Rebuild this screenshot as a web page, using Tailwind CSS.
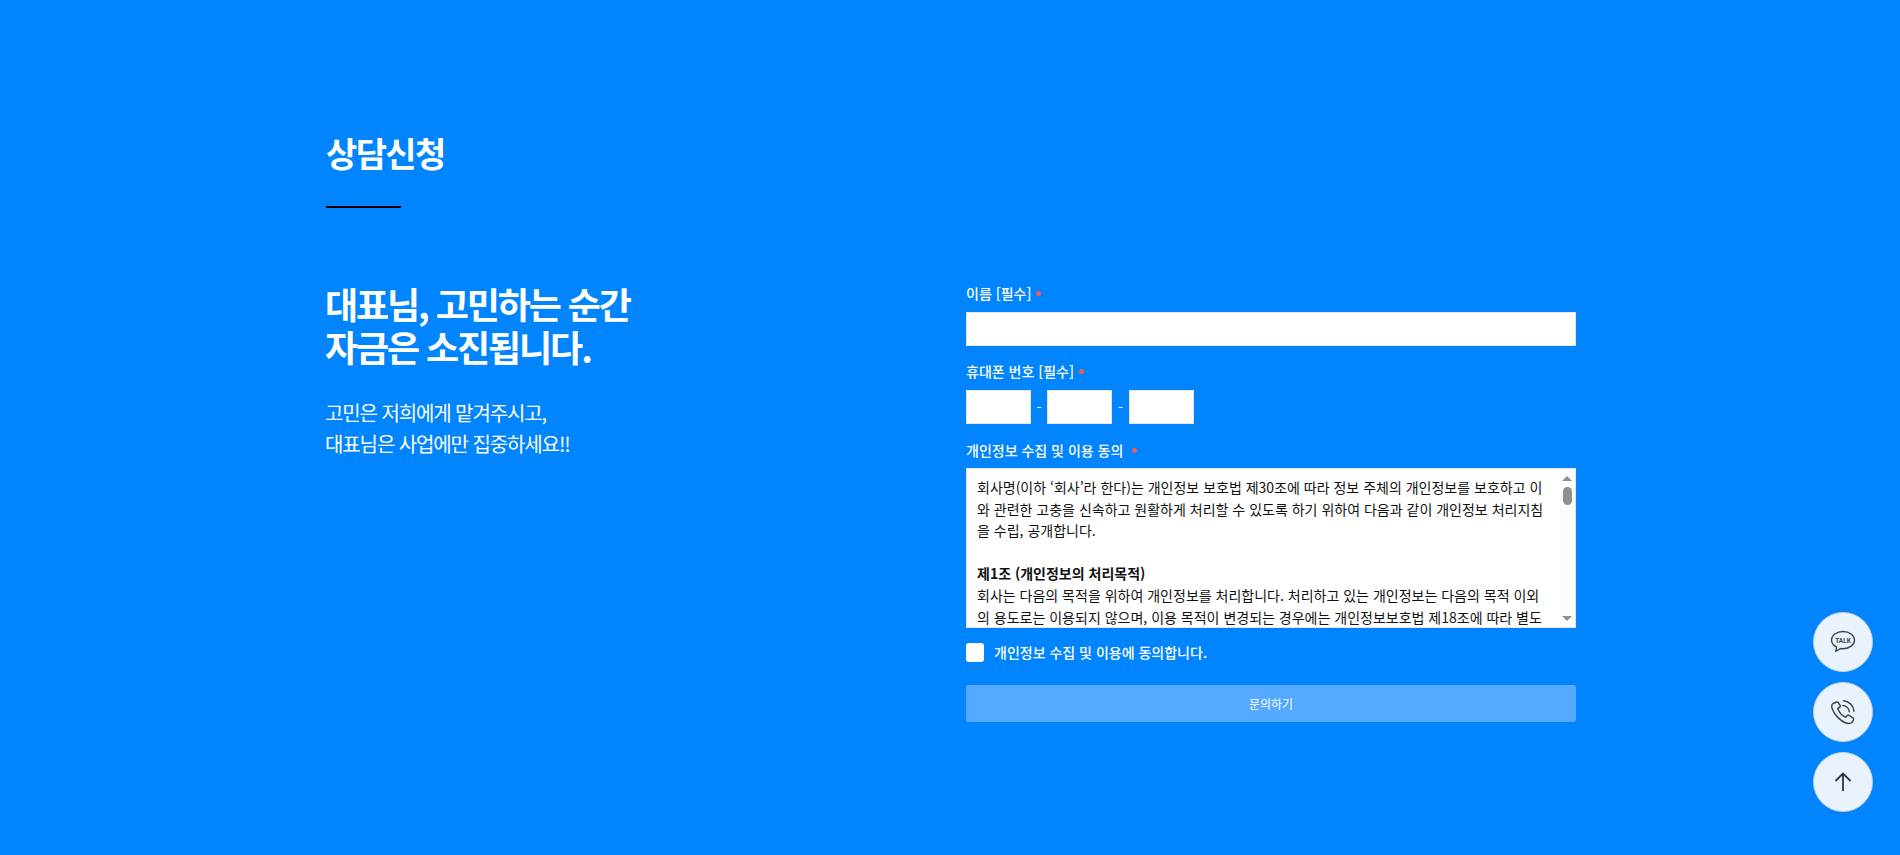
<!DOCTYPE html>
<html lang="ko">
<head>
  <meta charset="UTF-8" />
  <title>상담신청</title>
  <script src="https://cdn.jsdelivr.net/npm/@tailwindcss/browser@4"></script>
</head>
<body class="bg-[#0085ff] h-[855px] overflow-hidden font-['Noto_Sans_CJK_KR','Noto_Sans',sans-serif] text-white">

  <section class="w-[1250px] ml-[326px] pt-[128px]">
    <h2 class="text-[34px] leading-[49px] font-bold tracking-[-1.6px]">상담신청</h2>
    <div class="w-[75px] h-[2px] bg-black mt-[29px]"></div>

    <div class="flex justify-between mt-[73px]">
      <!-- 왼쪽 문구 -->
      <div class="-ml-px pt-px">
        <h3 class="text-[36px] leading-[43px] font-bold tracking-[-2.1px]">대표님, 고민하는 순간<br />자금은 소진됩니다.</h3>
        <p class="mt-[29px] text-[20px] leading-[31px] tracking-[-1.1px]">고민은 저희에게 맡겨주시고,<br />대표님은 사업에만 집중하세요!!</p>
      </div>

      <!-- 상담 폼 -->
      <form class="w-[610px] shrink-0 pt-[2px]">
        <label class="flex items-center h-[20px] mb-[9px] text-[14px] font-medium">이름 [필수]<span class="w-[5px] h-[5px] rounded-full bg-[#f25c5c] ml-[5px]"></span></label>
        <input type="text" class="block w-full h-[34px] bg-white border border-[#e5e5e5]" />

        <label class="flex items-center h-[20px] mt-[15px] mb-[9px] text-[14px] font-medium">휴대폰 번호 [필수]<span class="w-[5px] h-[5px] rounded-full bg-[#f25c5c] ml-[5px]"></span></label>
        <div class="flex items-center">
          <input type="text" class="w-[65px] h-[34px] bg-white border border-[#e5e5e5]" />
          <span class="w-[16px] text-center text-[14px]">-</span>
          <input type="text" class="w-[65px] h-[34px] bg-white border border-[#e5e5e5]" />
          <span class="w-[17px] text-center text-[14px]">-</span>
          <input type="text" class="w-[65px] h-[34px] bg-white border border-[#e5e5e5]" />
        </div>

        <label class="flex items-center h-[20px] mt-[16px] mb-[8px] text-[14px] font-medium">개인정보 수집 및 이용 동의<span class="w-[5px] h-[5px] rounded-full bg-[#f25c5c] ml-[9px]"></span></label>
        <div class="flex h-[160px] bg-white border border-[#e5e5e5]">
          <div class="flex-1 min-w-0 overflow-hidden pl-[10px] pr-[8px] pt-[8px] text-[14px] leading-[21.6px] text-[#111]">
            회사명(이하 ‘회사’라 한다)는 개인정보 보호법 제30조에 따라 정보 주체의 개인정보를 보호하고 이와 관련한 고충을 신속하고 원활하게 처리할 수 있도록 하기 위하여 다음과 같이 개인정보 처리지침을 수립, 공개합니다.<br /><br />
            <b class="font-bold">제1조 (개인정보의 처리목적)</b><br />
            회사는 다음의 목적을 위하여 개인정보를 처리합니다. 처리하고 있는 개인정보는 다음의 목적 이외의 용도로는 이용되지 않으며, 이용 목적이 변경되는 경우에는 개인정보보호법 제18조에 따라 별도의 동의를 받는 등 필요한 조치를 이행할 예정입니다.
          </div>
          <!-- 스크롤바 -->
          <div class="w-[15px] shrink-0 bg-[#fcfcfc] flex flex-col items-center pt-[7px] pb-[6px] pr-px">
            <span class="w-0 h-0 border-x-[5px] border-x-transparent border-b-[5px] border-b-[#8f8f8f]"></span>
            <span class="w-[9px] h-[18px] mt-[6px] rounded-full bg-[#8f8f8f]"></span>
            <span class="w-0 h-0 mt-auto border-x-[5px] border-x-transparent border-t-[5px] border-t-[#8f8f8f]"></span>
          </div>
        </div>

        <label class="flex items-center mt-[15px] h-[19px] text-[14px] font-medium">
          <span class="w-[18px] h-[19px] bg-white rounded-[3px] mr-[10px]"></span>개인정보 수집 및 이용에 동의합니다.
        </label>

        <button type="button" class="block w-full h-[37px] mt-[23px] bg-[#55a9ff] rounded-[2px] text-[12px]">문의하기</button>
      </form>
    </div>
  </section>

  <!-- 우측 플로팅 버튼 -->
  <div class="fixed right-[27px] top-[612px] flex flex-col gap-[10px]">
    <a class="w-[60px] h-[60px] rounded-full bg-[#e8f3ff] border border-[#c3ced9] flex items-center justify-center">
      <svg width="26" height="24" viewBox="0 0 26 24" fill="none" stroke="#444" stroke-width="1.4">
        <path d="M13 1.5C6.5 1.5 1.5 5.3 1.5 10c0 3 2 5.500 5 7l-.7 4.500 4.600-3c.8.1 1.700.2 2.600.2 6.500 0 11.500-3.900 11.500-8.700S19.500 1.500 13 1.500z" stroke-linejoin="round" />
        <text x="13" y="12.500" text-anchor="middle" font-size="6.500" font-weight="700" fill="#444" stroke="none" font-family="Roboto, sans-serif">TALK</text>
      </svg>
    </a>
    <a class="w-[60px] h-[60px] rounded-full bg-[#e8f3ff] border border-[#c3ced9] flex items-center justify-center">
      <svg width="26" height="26" viewBox="0 0 26 26" fill="none" stroke="#444" stroke-width="1.500" stroke-linecap="round" stroke-linejoin="round">
        <path d="M6.500 3 3 4.500C1.500 5.500 1.500 8 2.500 10.500 4.500 15.500 10 22 16 24c2.500.8 5 .5 6.500-1l1-2.500c.2-.7 0-1.200-.5-1.600l-4-2.600c-.6-.4-1.300-.3-1.800.2l-1.500 1.700c-3-1.200-6.500-5-8-8.500l2-1.500c.6-.5.7-1.200.4-1.800L8.300 3.600C7.900 3 7.200 2.800 6.500 3z" />
        <path d="M13 6.500c3.400.3 6 3 6.300 6.300" />
        <path d="M13.500 1.800c5.500.4 10 4.800 10.500 10.400" />
      </svg>
    </a>
    <a class="w-[60px] h-[60px] rounded-full bg-[#e8f3ff] border border-[#c3ced9] flex items-center justify-center">
      <svg width="18" height="20" viewBox="0 0 18 20" fill="none" stroke="#333" stroke-width="1.800">
        <path d="M9 19V2M1.500 9 9 1.500 16.500 9" />
      </svg>
    </a>
  </div>

</body>
</html>
